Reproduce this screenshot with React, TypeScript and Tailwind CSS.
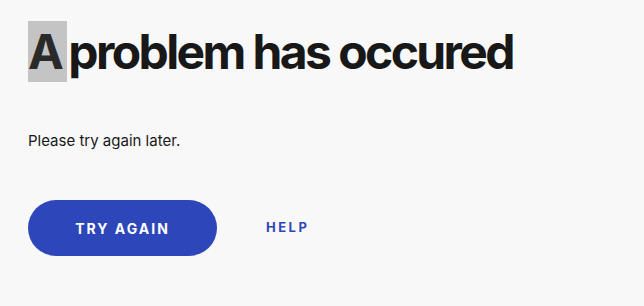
import React from 'react';

export default function App() {
    return (
        <div className="min-h-[306px] w-full bg-[#f8f8f8] px-7 pt-[21px] text-[#181818]" style={{ fontFamily: 'Inter, "Noto Sans", sans-serif' }}>
            <h1 className="flex text-[48px] font-bold leading-[61px] tracking-[-2.6px]">
                <span className="bg-[#c4c4c4] pr-[6px] text-[#2a2a2a]">A</span>
                <span className="ml-[1px] whitespace-pre">problem has occured</span>
            </h1>
            <p className="mt-[49px] text-[15px] leading-[20px]">Please try again later.</p>
            <div className="mt-[49px] flex items-center gap-[49px]">
                <button className="h-[56px] w-[189px] rounded-full bg-[#2d46b9] text-[14px] font-bold tracking-[2px] text-white">
                    TRY AGAIN
                </button>
                <button className="text-[13px] font-bold tracking-[2.5px] text-[#2d46b9]">HELP</button>
            </div>
        </div>
    );
}
